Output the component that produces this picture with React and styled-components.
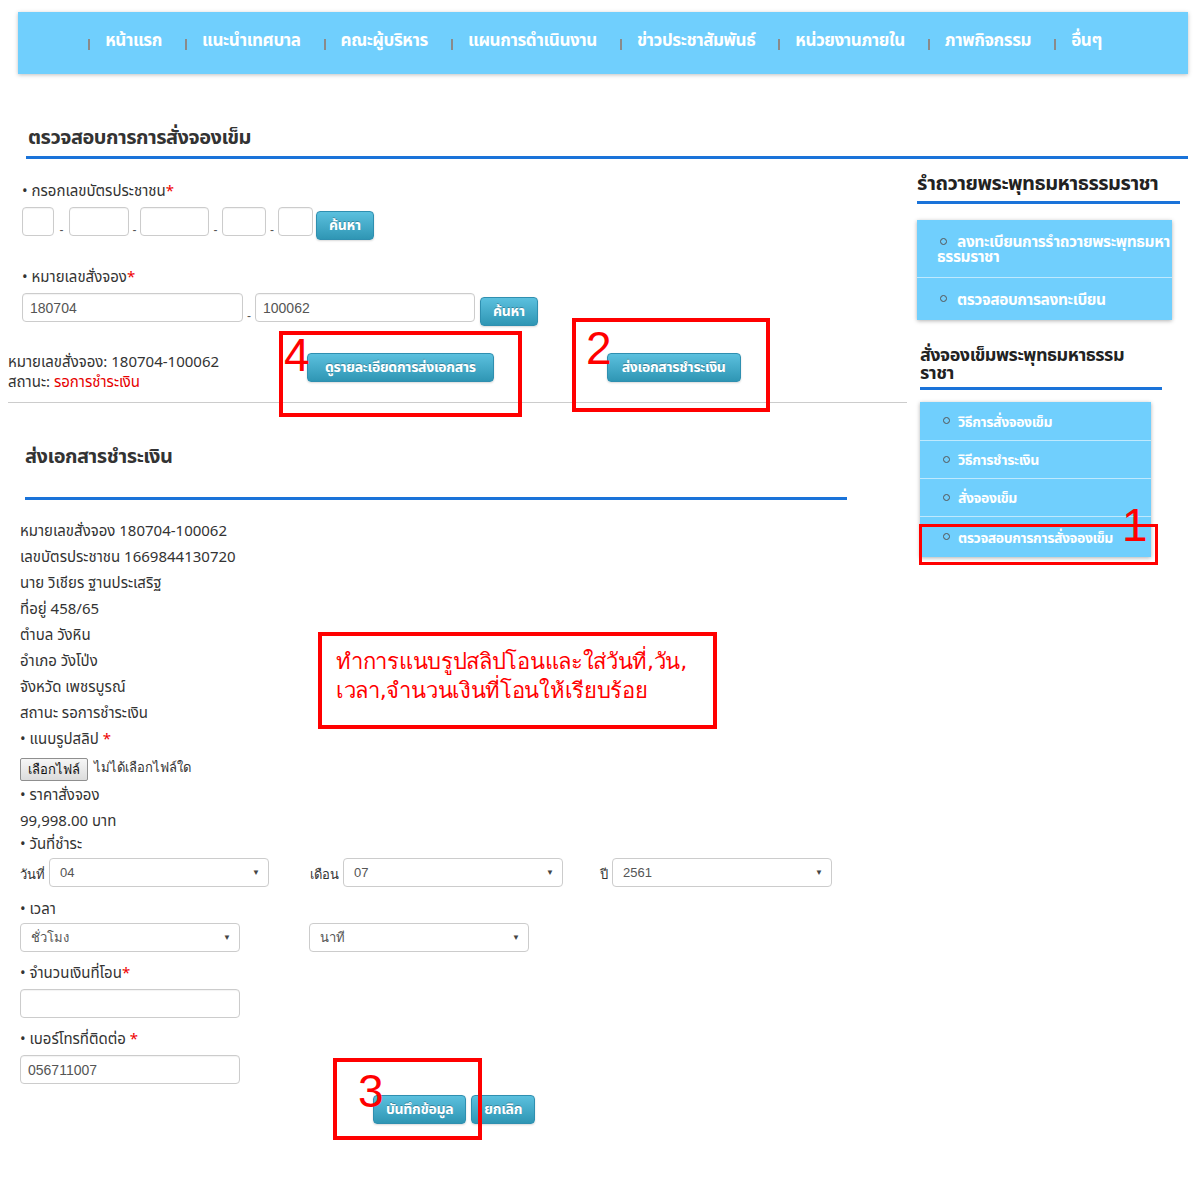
import React from 'react';
import styled, { createGlobalStyle } from 'styled-components';

const GlobalStyle = createGlobalStyle`
  body {
    margin: 0;
    background: #fff;
    font-family: "Noto Sans", "Noto Sans Thai", "Open Sans", sans-serif;
    color: #333;
  }
  * { box-sizing: border-box; }
`;

const Page = styled.div`
  position: relative;
  width: 1200px;
  height: 1200px;
  padding-top: 12px;
`;

const Nav = styled.nav`
  margin-left: 18px;
  width: 1170px;
  height: 62px;
  background: #70cffd;
  box-shadow: 0 1px 4px rgba(0, 0, 0, 0.25);
  display: flex;
  align-items: center;
  justify-content: center;
  padding: 0 16px 4px 0;
`;

const NavItem = styled.span`
  display: flex;
  align-items: center;
  margin-right: 23px;
  &:last-child { margin-right: 0; }
`;

const NavSep = styled.span`
  width: 2px;
  height: 11px;
  background: #8a8a8a;
  margin: 7px 15px 0 0;
`;

const NavLink = styled.a`
  color: #fff;
  font-weight: 700;
  font-size: 17px;
  letter-spacing: -0.4px;
  text-decoration: none;
`;

const TitleRow = styled.div`
  margin: 49px 12px 0 26px;
  padding: 0 0 5px 2px;
  border-bottom: 3px solid #1a73d9;
`;

const Title = styled.h2`
  margin: 0;
  font-size: 20px;
  line-height: 28px;
  font-weight: 700;
  color: #333;
  letter-spacing: -0.5px;
`;

const Columns = styled.div`
  display: flex;
  gap: 10px;
`;

const Main = styled.div`
  width: 899px;
  margin-left: 8px;
`;

const Field = styled.div`
  padding-left: 14px;
  margin-top: ${(p) => p.top || 0}px;
`;

const Label = styled.div`
  font-size: 15px;
  line-height: 20px;
  color: #333;
  margin-top: ${(p) => p.top || 0}px;
`;

const Req = styled.span`
  color: #e00;
`;

const InputRow = styled.div`
  display: flex;
  align-items: flex-start;
  margin-top: ${(p) => p.top || 7}px;
`;

const Dash = styled.span`
  width: ${(p) => p.w || 16}px;
  text-align: center;
  font-family: "Liberation Sans", Arial, sans-serif;
  font-size: 12px;
  line-height: 12px;
  padding-top: 17px;
  color: #555;
`;

const TextInput = styled.div`
  width: ${(p) => p.w}px;
  height: 29px;
  border: 1px solid #ccc;
  border-radius: 4px;
  background: #fff;
  box-shadow: inset 0 1px 1px rgba(0, 0, 0, 0.05);
  font-family: "Liberation Sans", Arial, sans-serif;
  font-size: 14px;
  color: #555;
  display: flex;
  align-items: center;
  padding-left: 7px;
`;

const Button = styled.button`
  margin-top: ${(p) => p.top || 0}px;
  margin-left: ${(p) => p.left || 0}px;
  height: 29px;
  padding: 0 ${(p) => p.px || 12}px;
  border: 1px solid #2f8fb0;
  border-radius: 4px;
  background: linear-gradient(to bottom, #5bc0de, #2f96b4);
  color: #fff;
  font-family: inherit;
  font-weight: 700;
  font-size: 14px;
  letter-spacing: -0.3px;
  text-shadow: 0 -1px 0 rgba(0, 0, 0, 0.25);
  box-shadow: 0 1px 2px rgba(0, 0, 0, 0.15);
  cursor: pointer;
`;

const ResultRow = styled.div`
  display: flex;
  align-items: flex-start;
  margin-top: 25px;
  padding-bottom: 11px;
  border-bottom: 1px solid #ccc;
`;

const ResultText = styled.div`
  width: 299px;
  font-size: 15px;
  line-height: 20px;
  color: #333;
`;

const Status = styled.span`
  color: #e60000;
`;

const SectionHead = styled.div`
  margin: 39px 60px 0 17px;
  padding-bottom: 27px;
  border-bottom: 3px solid #1a73d9;
`;

const Info = styled.div`
  padding-left: 12px;
  margin-top: 17px;
`;

const InfoLine = styled.div`
  font-size: 15px;
  line-height: 26px;
  color: #333;
`;

const FileRow = styled.div`
  display: flex;
  align-items: center;
  gap: 6px;
  margin: 7px 0 0;
`;

const FileButton = styled.button`
  height: 23px;
  padding: 0 7px;
  border: 1px solid #8f8f8f;
  border-radius: 2px;
  background: linear-gradient(to bottom, #f6f6f6, #dcdcdc);
  font-family: "DejaVu Sans", sans-serif;
  font-size: 13px;
  color: #111;
`;

const FileNote = styled.span`
  font-family: "DejaVu Sans", sans-serif;
  font-size: 13px;
  color: #333;
  margin-top: -4px;
`;

const SelectRow = styled.div`
  display: flex;
  align-items: flex-end;
  margin-top: ${(p) => p.top || 6}px;
`;

const SelectGroup = styled.div`
  display: flex;
  align-items: flex-end;
  width: ${(p) => p.w}px;
`;

const SmallLabel = styled.span`
  font-family: "DejaVu Sans", sans-serif;
  font-size: 13px;
  color: #333;
  margin-right: 4px;
  padding-bottom: 2px;
`;

const SelectBox = styled.div`
  width: 220px;
  height: 29px;
  border: 1px solid #ccc;
  border-radius: 4px;
  background: #fff;
  display: flex;
  align-items: center;
  justify-content: space-between;
  padding: 0 8px 0 10px;
  font-family: "Liberation Sans", Arial, sans-serif;
  font-size: 13px;
  color: #555;
`;

const Caret = styled.span`
  font-size: 8px;
  color: #444;
`;

const Actions = styled.div`
  display: flex;
  gap: 5px;
  margin: 11px 0 0 365px;
`;

const Side = styled.aside`
  width: 271px;
`;

const SideHead = styled.div`
  margin: ${(p) => p.top}px 0 0 ${(p) => p.left || 0}px;
  width: ${(p) => p.w}px;
  padding-bottom: 6px;
  border-bottom: 3px solid #1a73d9;
  font-size: ${(p) => p.size || 18}px;
  font-weight: 700;
  line-height: ${(p) => p.lh || 24}px;
  letter-spacing: -0.5px;
  color: #222;
`;

const Menu = styled.ul`
  list-style: none;
  margin: ${(p) => p.top || 16}px 0 0 ${(p) => p.left || 0}px;
  padding: 0;
  width: ${(p) => p.w}px;
  background: #70cffd;
  box-shadow: 0 1px 4px rgba(0, 0, 0, 0.3);
`;

const MenuItem = styled.li`
  display: flex;
  flex-wrap: wrap;
  align-items: center;
  align-content: center;
  min-height: ${(p) => p.h || 38}px;
  padding: 4px 2px 4px 20px;
  border-top: 1px solid rgba(255, 255, 255, 0.55);
  color: #fff;
  font-weight: 700;
  font-size: ${(p) => p.size || 14}px;
  line-height: 15px;
  letter-spacing: -0.4px;
  &:first-child { border-top: none; }
`;

const MenuText = styled.span`
  display: block;
`;

const Bullet = styled.span`
  display: inline-block;
  width: 7px;
  height: 7px;
  border: 1px solid #555;
  border-radius: 50%;
  margin: 0 ${(p) => p.gap || 8}px 1px 3px;
  vertical-align: middle;
`;

const MarkBox = styled.div`
  position: absolute;
  left: ${(p) => p.x}px;
  top: ${(p) => p.y}px;
  width: ${(p) => p.w}px;
  height: ${(p) => p.h}px;
  border: ${(p) => p.b || 4}px solid #ff0000;
  pointer-events: none;
`;

const MarkNum = styled.span`
  position: absolute;
  left: ${(p) => p.x}px;
  top: ${(p) => p.y}px;
  font-family: "Liberation Sans", Arial, sans-serif;
  font-size: 46px;
  line-height: 46px;
  color: #ff0000;
`;

const Note = styled.div`
  font-family: "DejaVu Sans", "Noto Sans", sans-serif;
  font-size: 22px;
  line-height: 29px;
  color: #ff0000;
  padding: 11px 0 0 14px;
  letter-spacing: -0.3px;
`;

const navItems = [
  'หน้าแรก',
  'แนะนำเทศบาล',
  'คณะผู้บริหาร',
  'แผนการดำเนินงาน',
  'ข่าวประชาสัมพันธ์',
  'หน่วยงานภายใน',
  'ภาพกิจกรรม',
  'อื่นๆ',
];

const info = [
  'หมายเลขสั่งจอง 180704-100062',
  'เลขบัตรประชาชน 1669844130720',
  'นาย วิเชียร ฐานประเสริฐ',
  'ที่อยู่ 458/65',
  'ตำบล วังหิน',
  'อำเภอ วังโป่ง',
  'จังหวัด เพชรบูรณ์',
  'สถานะ รอการชำระเงิน',
];

export default function App() {
  return (
    <Page>
      <GlobalStyle />
      <Nav>
        {navItems.map((t) => (
          <NavItem key={t}>
            <NavSep />
            <NavLink>{t}</NavLink>
          </NavItem>
        ))}
      </Nav>

      <TitleRow>
        <Title>ตรวจสอบการการสั่งจองเข็ม</Title>
      </TitleRow>

      <Columns>
        <Main>
          <Field top={21}>
            <Label>• กรอกเลขบัตรประชาชน<Req>*</Req></Label>
            <InputRow>
              <TextInput w={32} />
              <Dash w={15}>-</Dash>
              <TextInput w={60} />
              <Dash w={11}>-</Dash>
              <TextInput w={69} />
              <Dash w={13}>-</Dash>
              <TextInput w={44} />
              <Dash w={12}>-</Dash>
              <TextInput w={35} />
              <Button top={4} left={3} px={12}>ค้นหา</Button>
            </InputRow>
          </Field>

          <Field top={26}>
            <Label>• หมายเลขสั่งจอง<Req>*</Req></Label>
            <InputRow>
              <TextInput w={221}>180704</TextInput>
              <Dash w={12}>-</Dash>
              <TextInput w={220}>100062</TextInput>
              <Button top={4} left={5} px={12}>ค้นหา</Button>
            </InputRow>
          </Field>

          <ResultRow>
            <ResultText>
              หมายเลขสั่งจอง: 180704-100062
              <br />
              สถานะ: <Status>รอการชำระเงิน</Status>
            </ResultText>
            <Button top={2} px={17}>ดูรายละเอียดการส่งเอกสาร</Button>
            <Button top={2} left={113} px={14}>ส่งเอกสารชำระเงิน</Button>
          </ResultRow>

          <SectionHead>
            <Title>ส่งเอกสารชำระเงิน</Title>
          </SectionHead>

          <Info>
            {info.map((l) => (
              <InfoLine key={l}>{l}</InfoLine>
            ))}
            <InfoLine>• แนบรูปสลิป <Req>*</Req></InfoLine>
            <FileRow>
              <FileButton>เลือกไฟล์</FileButton>
              <FileNote>ไม่ได้เลือกไฟล์ใด</FileNote>
            </FileRow>
            <InfoLine>• ราคาสั่งจอง</InfoLine>
            <InfoLine>99,998.00 บาท</InfoLine>
            <Label>• วันที่ชำระ</Label>

            <SelectRow top={5}>
              <SelectGroup w={290}>
                <SmallLabel>วันที่</SmallLabel>
                <SelectBox>04<Caret>▼</Caret></SelectBox>
              </SelectGroup>
              <SelectGroup w={290}>
                <SmallLabel>เดือน</SmallLabel>
                <SelectBox>07<Caret>▼</Caret></SelectBox>
              </SelectGroup>
              <SelectGroup w={240}>
                <SmallLabel>ปี</SmallLabel>
                <SelectBox>2561<Caret>▼</Caret></SelectBox>
              </SelectGroup>
            </SelectRow>

            <Label top={11}>• เวลา</Label>
            <SelectRow top={5}>
              <SelectGroup w={289}>
                <SelectBox>ชั่วโมง<Caret>▼</Caret></SelectBox>
              </SelectGroup>
              <SelectGroup w={240}>
                <SelectBox>นาที<Caret>▼</Caret></SelectBox>
              </SelectGroup>
            </SelectRow>

            <Label top={10}>• จำนวนเงินที่โอน<Req>*</Req></Label>
            <InputRow top={7}>
              <TextInput w={220} />
            </InputRow>
            <Label top={10}>• เบอร์โทรที่ติดต่อ <Req>*</Req></Label>
            <InputRow top={7}>
              <TextInput w={220}>056711007</TextInput>
            </InputRow>
          </Info>

          <Actions>
            <Button px={12}>บันทึกข้อมูล</Button>
            <Button px={12}>ยกเลิก</Button>
          </Actions>
        </Main>

        <Side>
          <SideHead top={12} w={263} size={20}>รำถวายพระพุทธมหาธรรมราชา</SideHead>
          <Menu w={255}>
            <MenuItem h={57} size={15.5}>
              <MenuText>
                <Bullet gap={10} />
                ลงทะเบียนการรำถวายพระพุทธมหาธรรมราชา
              </MenuText>
            </MenuItem>
            <MenuItem h={43} size={15.5}>
              <Bullet gap={10} />
              ตรวจสอบการลงทะเบียน
            </MenuItem>
          </Menu>

          <SideHead top={25} left={3} w={242} lh={18}>
            สั่งจองเข็มพระพุทธมหาธรรม
            <br />
            ราชา
          </SideHead>
          <Menu top={12} left={3} w={231}>
            <MenuItem><Bullet />วิธีการสั่งจองเข็ม</MenuItem>
            <MenuItem><Bullet />วิธีการชำระเงิน</MenuItem>
            <MenuItem><Bullet />สั่งจองเข็ม</MenuItem>
            <MenuItem h={41}><Bullet />ตรวจสอบการการสั่งจองเข็ม</MenuItem>
          </Menu>
        </Side>
      </Columns>

      <MarkBox x={279} y={331} w={243} h={86} />
      <MarkNum x={284} y={332}>4</MarkNum>
      <MarkBox x={572} y={318} w={198} h={94} />
      <MarkNum x={586} y={325}>2</MarkNum>
      <MarkBox x={919} y={524} w={239} h={41} b={3} />
      <MarkNum x={1122} y={502}>1</MarkNum>
      <MarkBox x={333} y={1058} w={149} h={82} />
      <MarkNum x={358} y={1068}>3</MarkNum>
      <MarkBox x={318} y={632} w={399} h={97}>
        <Note>
          ทำการแนบรูปสลิปโอนและใส่วันที่,วัน,
          <br />
          เวลา,จำนวนเงินที่โอนให้เรียบร้อย
        </Note>
      </MarkBox>
    </Page>
  );
}
